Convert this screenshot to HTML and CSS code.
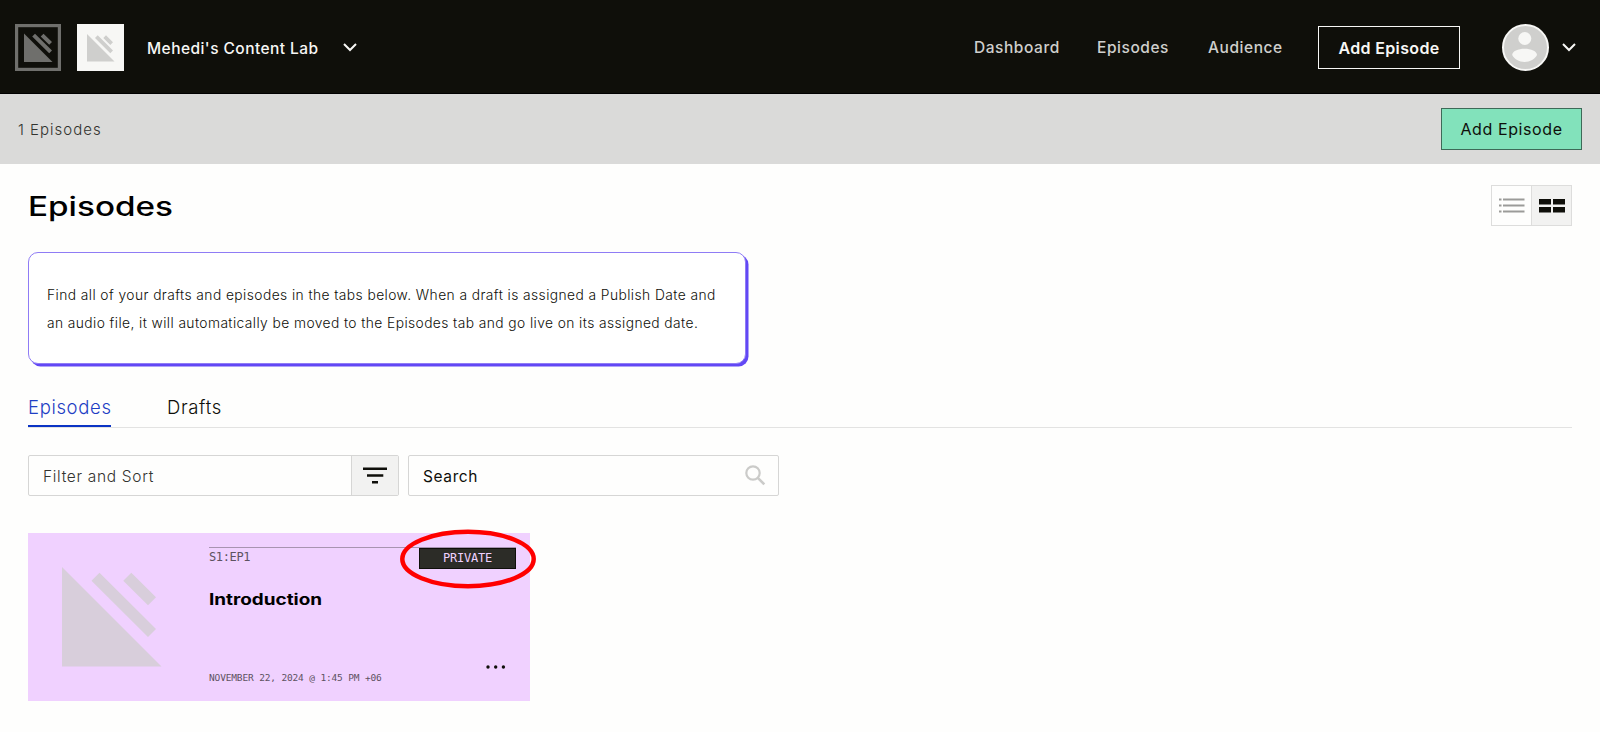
FILE: index.html
```html
<!DOCTYPE html>
<html lang="en">
<head>
    <meta charset="UTF-8">
    <meta name="viewport" content="width=device-width, initial-scale=1.0">
    <title>Episodes</title>
    <link rel="stylesheet" href="styles.css">
</head>
<body>
    <header class="topbar">
        <svg class="logo" viewBox="0 0 46 47">
            <rect x="1.5" y="1.5" width="43" height="44" fill="none" stroke="#6f6f6c" stroke-width="3.400"/>
            <path fill="#6f6f6c" d="M9 9.5V38h28.500zM17.200 12.500l2.800-2.800L37 26.500l-2.800 2.800zM25.700 12.500l2.800-2.800L37 18l-2.800 2.800z"/>
        </svg>
        <svg class="show-art" viewBox="0 0 47 47">
            <rect width="47" height="47" fill="#f7f7f5"/>
            <path fill="#cfcfcd" d="M10 10v27.500h27.500zM18 14l2.700-2.700L36 26.600l-2.700 2.700zM26.300 14l2.700-2.700L36 18.300 33.300 21z"/>
        </svg>
        <span class="show-name">Mehedi's Content Lab</span>
        <svg class="chevron" viewBox="0 0 14 9"><path d="M1 1l6 6 6-6"/></svg>
        <nav class="nav">
            <a class="nav-dashboard">Dashboard</a>
            <a class="nav-episodes">Episodes</a>
            <a class="nav-audience">Audience</a>
        </nav>
        <button class="btn btn-outline">Add Episode</button>
        <svg class="avatar" viewBox="0 0 47 47">
            <circle cx="23.500" cy="23.500" r="22.500" fill="#cfcfcd" stroke="#f7f7f5" stroke-width="2"/>
            <circle cx="22.800" cy="14.500" r="6.500" fill="#f7f7f5"/>
            <path fill="#f7f7f5" d="M10.200 31c0-4 6-6.300 12.400-6.300S35 27 35 31c-2 4-7 7-12.400 7s-10.400-3-12.400-7z"/>
        </svg>
        <svg class="chevron chevron-user" viewBox="0 0 14 9"><path d="M1 1l6 6 6-6"/></svg>
    </header>

    <div class="subbar">
        <span class="count">1 Episodes</span>
        <button class="btn btn-green">Add Episode</button>
    </div>

    <main class="content">
        <div class="title-row">
            <h1 class="title">Episodes</h1>
            <div class="view-toggle">
                <div class="view">
                    <svg width="26" height="15" viewBox="0 0 26 15" fill="#9b9b99">
                        <path d="M0 .5h2.500v2H0zM4 .5h21.500v2H4zM0 6.500h2.500v2H0zM4 6.500h21.500v2H4zM0 12.500h2.500v2H0zM4 12.500h21.500v2H4z"/>
                    </svg>
                </div>
                <div class="view active">
                    <svg width="26" height="15" viewBox="0 0 26 15" fill="#0f0f0a">
                        <path d="M0 1h12v5.500H0zM14 1h12v5.500H14zM0 9h12v5.500H0zM14 9h12v5.500H14z"/>
                    </svg>
                </div>
            </div>
        </div>

        <div class="notice">
            <span class="line-one">Find all of your drafts and episodes in the tabs below. When a draft is assigned a Publish Date and</span><br>
            <span class="line-two">an audio file, it will automatically be moved to the Episodes tab and go live on its assigned date.</span>
        </div>

        <div class="tabs">
            <a class="tab selected">Episodes</a>
            <a class="tab tab-drafts">Drafts</a>
        </div>

        <div class="filters">
            <div class="field">
                <span class="filter-label">Filter and Sort</span>
                <div class="filter-icon">
                    <svg width="24" height="17" viewBox="0 0 24 17" fill="#0f0f0a"><path d="M0 .5h24V3H0zM4 7.200h16.300v2.500H4zM9 14h6v2.500H9z"/></svg>
                </div>
            </div>
            <div class="field">
                <span class="search-label">Search</span>
                <svg class="search-icon" width="21" height="21" viewBox="0 0 21 21" fill="none" stroke="#cbcbc9"><circle cx="8" cy="8" r="6.700" stroke-width="2.200"/><path d="M12.800 12.800l6.500 6.500" stroke-width="2.600"/></svg>
            </div>
        </div>

        <article class="card">
            <svg class="card-art" viewBox="0 0 100 100" fill="#d8cedb">
                <path d="M0 0v99.500h99.500zM29.500 13.700l8-8L94 62l-8 8zM61.300 13.700l8-8L94 30.300l-8 8z"/>
            </svg>
            <div class="card-body">
                <div class="card-head">
                    <span class="number">S1:EP1</span>
                    <span class="badge"><span class="badge-text">PRIVATE</span></span>
                </div>
                <h2 class="card-title">Introduction</h2>
                <div class="card-foot">
                    <span class="date">NOVEMBER 22, 2024 @ 1:45 PM +06</span>
                    <svg class="dots" width="20" height="4" viewBox="0 0 20 4"><circle cx="2" cy="2" r="1.700"/><circle cx="9.700" cy="2" r="1.700"/><circle cx="17.400" cy="2" r="1.700"/></svg>
                </div>
            </div>
            <svg class="ring" viewBox="0 0 136 60"><ellipse cx="68" cy="30" rx="65.700" ry="27.200"/></svg>
        </article>
    </main>
</body>
</html>
```
FILE: styles.css
```css
* {
    box-sizing: border-box;
}
body {
    margin: 0;
    font-family: Inter, 'Liberation Sans', sans-serif;
    font-size: 15.500px;
    font-weight: 300;
    color: #0f0f0a;
    background-color: #fefefd;
}
svg {
    display: block;
    flex-shrink: 0;
}
a, span {
    white-space: nowrap;
}
.topbar {
    display: flex;
    align-items: center;
    height: 94px;
    padding: 2px 24px 0 15px;
    background-color: #0f0f0a;
    border-bottom: 1px solid #000;
    color: #f7f7f5;
    font-weight: 500;
}
.logo {
    width: 46px;
    height: 47px;
}
.show-art {
    width: 47px;
    height: 47px;
    margin-left: 16px;
}
.show-name {
    width: 172px;
    margin: 2px 0 0 23px;
    letter-spacing: 0.450px;
}
.chevron {
    width: 14px;
    height: 9px;
    margin-left: 24px;
    fill: none;
    stroke: #f7f7f5;
    stroke-width: 2;
}
.chevron-user {
    margin-left: 13px;
}
.nav {
    display: flex;
    margin: 0 -1px 0 auto;
    color: #cfcfcd;
}
.nav a {
    letter-spacing: 0.550px;
}
.nav-dashboard {
    width: 123px;
}
.nav-episodes {
    width: 111px;
}
.nav-audience {
    width: 111px;
}
.btn {
    flex-shrink: 0;
    padding: 0;
    font-family: Inter, sans-serif;
    font-size: 16px;
    white-space: nowrap;
}
.btn-outline {
    width: 142px;
    height: 43px;
    background: none;
    border: 1px solid #f7f7f5;
    color: #f7f7f5;
    font-weight: 600;
    letter-spacing: 0.350px;
}
.avatar {
    width: 47px;
    height: 47px;
    margin-left: 42px;
}
.subbar {
    display: flex;
    align-items: center;
    justify-content: space-between;
    height: 70px;
    padding: 0 18px;
    background-color: #dadad9;
}
.count {
    color: #33332f;
    font-size: 15px;
    letter-spacing: 1px;
}
.btn-green {
    width: 141px;
    height: 42px;
    border: 1px solid #3d6a58;
    background-color: #82e2bb;
    color: #0f0f0a;
    font-weight: 400;
    letter-spacing: 0.6px;
}
.content {
    padding: 21px 28px 0;
}
.title-row {
    display: flex;
    justify-content: space-between;
    height: 67px;
}
.title {
    margin: 4px 0 0;
    font-size: 26.500px;
    line-height: 34px;
    font-weight: 500;
    transform: scaleX(1.255);
    transform-origin: left;
    color: #000;
}
.view-toggle {
    display: flex;
    width: 81px;
    height: 41px;
    border: 1px solid #dddddc;
}
.view {
    flex: 1;
    display: flex;
    align-items: center;
    justify-content: center;
}
.view.active {
    background-color: #f2f2f1;
    border-left: 1px solid #dddddc;
}
.notice {
    width: 718px;
    height: 112px;
    padding: 29px 18px;
    border: 1px solid #8f7cf5;
    border-radius: 10px;
    box-shadow: 2.500px 2.500px 0 #6248f5;
    background-color: #fff;
    font-size: 13.800px;
    line-height: 27.500px;
}
.line-one {
    letter-spacing: 0.425px;
}
.line-two {
    letter-spacing: 0.415px;
}
.tabs {
    display: flex;
    height: 33px;
    margin-top: 31px;
    border-bottom: 1px solid #e3e3e2;
    font-size: 18.500px;
    line-height: 25px;
}
.tab {
    height: 32px;
    letter-spacing: 0.650px;
}
.tab.selected {
    width: 83px;
    border-bottom: 2px solid #0b34c4;
    color: #1f3fc4;
}
.tab-drafts {
    margin-left: 56px;
}
.filters {
    display: flex;
    gap: 9px;
    margin-top: 27px;
}
.field {
    display: flex;
    align-items: center;
    justify-content: space-between;
    width: 371px;
    height: 41px;
    padding-left: 14px;
    border: 1px solid #d6d6d5;
    border-radius: 2px;
}
.filter-label {
    margin-top: 1px;
    color: #33332f;
    letter-spacing: 0.680px;
}
.filter-icon {
    display: flex;
    align-items: center;
    justify-content: center;
    width: 47px;
    height: 39px;
    background-color: #f2f2f1;
    border-left: 1px solid #d6d6d5;
}
.search-label {
    margin-top: 1px;
    font-weight: 400;
    letter-spacing: 0.6px;
}
.search-icon {
    margin-right: 12px;
}
.card {
    position: relative;
    display: flex;
    width: 502px;
    height: 168px;
    margin-top: 37px;
    padding: 14px 14px 14px 34px;
    background-color: #f0d1ff;
    font-family: 'DejaVu Sans Mono', monospace;
    font-weight: 400;
}
.card-art {
    width: 100px;
    height: 100px;
    margin-top: 20px;
}
.card-body {
    display: flex;
    flex-direction: column;
    flex: 1;
    margin-left: 47px;
}
.card-head {
    display: flex;
    justify-content: space-between;
    border-top: 1px solid #a893b1;
    color: #5d5261;
    font-size: 12px;
    line-height: 19px;
}
.number {
    letter-spacing: -0.350px;
}
.badge {
    width: 97px;
    height: 21px;
    border: 1px solid #0f0f0a;
    background-color: #2c2c27;
    color: #efd1fe;
    text-align: center;
}
.badge-text {
    letter-spacing: -0.2px;
}
.card-title {
    align-self: flex-start;
    margin: 21px 0 0;
    font-family: Inter, sans-serif;
    font-size: 15.500px;
    font-weight: 700;
    line-height: 20px;
    color: #000;
    transform: scaleX(1.220);
    transform-origin: left;
}
.card-foot {
    display: flex;
    justify-content: space-between;
    margin-top: auto;
}
.date {
    align-self: flex-end;
    color: #5d5261;
    font-size: 9.500px;
    letter-spacing: -0.150px;
    line-height: 18px;
}
.dots {
    margin: 0 10px 18px 0;
    fill: #0f0f0a;
}
/* highlight around the private badge */
.ring {
    position: absolute;
    left: 372px;
    top: -4px;
    width: 136px;
    height: 60px;
    fill: none;
    stroke: #f00;
    stroke-width: 4.500;
}
```
